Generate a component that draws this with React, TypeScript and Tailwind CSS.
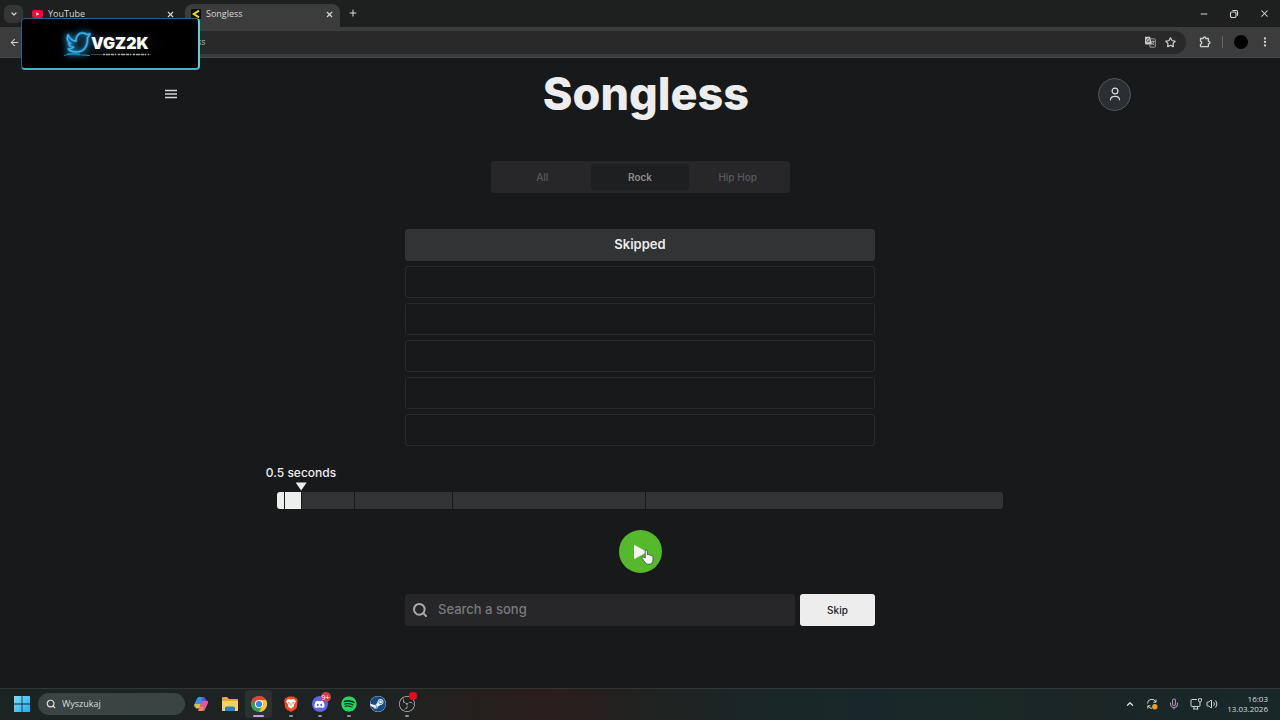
import type { ReactNode } from "react";
import {
  ArrowLeft,
  ChevronDown,
  ChevronUp,
  EllipsisVertical,
  Mic,
  Minus,
  Plus,
  Search,
  Star,
  Volume2,
  X,
} from "lucide-react";
import { FaDiscord, FaSpotify, FaSteam } from "react-icons/fa";
import { SiObsstudio } from "react-icons/si";

function TabStrip() {
  return (
    <div className="flex h-[27px] items-end bg-[#1e201f] pl-1 font-['Open_Sans',sans-serif] text-[9px] text-[#d6d8d8]">
      <button aria-label="Search tabs" className="mb-1 flex h-[18px] w-[19px] items-center justify-center rounded-md bg-[#353635]">
        <ChevronDown className="size-2" strokeWidth={3.5} />
      </button>
      <div className="flex h-[23px] w-[162px] items-center pr-[10px] pb-[3px] pl-[9px]">
        <svg viewBox="0 0 11 8" className="h-2 w-[11px]" aria-hidden="true">
          <rect width="11" height="8" rx="2" fill="#f1073c" />
          <path d="M4.3 2.2v3.6L7.4 4z" fill="#fff" />
        </svg>
        <span className="ml-[5px] flex-1">YouTube</span>
        <button aria-label="Close YouTube tab">
          <X className="size-[9px]" strokeWidth={3} />
        </button>
      </div>
      <div className="flex h-[23px] w-[155px] items-center rounded-t-lg bg-[#3c3c3c] pr-[6px] pb-[3px] pl-[6px]">
        <svg viewBox="0 0 10 10" className="size-[10px]" aria-hidden="true">
          <rect width="10" height="10" rx="1" fill="#0b0b0b" />
          <path d="M8 1.6 2.8 5 8 8.4" fill="none" stroke="#e8dc20" strokeWidth="2" />
        </svg>
        <span className="ml-[5px] flex-1">Songless</span>
        <button aria-label="Close Songless tab">
          <X className="size-[9px]" strokeWidth={3} />
        </button>
      </div>
      <button aria-label="New tab" className="mb-[9px] ml-2">
        <Plus className="size-[10px]" strokeWidth={2.5} />
      </button>
      <div className="ml-auto flex items-center gap-5 pr-[10px] pb-[8px]">
        <button aria-label="Minimize">
          <Minus className="size-[10px]" strokeWidth={2.5} />
        </button>
        <button aria-label="Restore">
          <svg viewBox="0 0 10 10" className="size-[10px]" fill="none" stroke="currentColor" strokeWidth="1.1" aria-hidden="true">
            <rect x="1.5" y="3" width="5.5" height="5.5" rx="1.2" />
            <path d="M3.4 1.5H7a1.6 1.6 0 0 1 1.6 1.6v3.6" />
          </svg>
        </button>
        <button aria-label="Close window">
          <X className="size-[11px]" strokeWidth={2.2} />
        </button>
      </div>
    </div>
  );
}

function Toolbar() {
  return (
    <div className="flex h-[31px] items-center border-b border-[#474747] bg-[#3c3c3c] pr-[9px] pl-[9px] text-[#d0d3d3]">
      <button aria-label="Back">
        <ArrowLeft className="size-[11px]" strokeWidth={2.3} />
      </button>
      <div className="ml-[60px] flex h-[23px] flex-1 items-center rounded-full bg-[#292929] pr-[10px]">
        <span className="pl-[117px] font-['Open_Sans',sans-serif] text-[9px] text-[#b5b8b8]">ss</span>
        <button aria-label="Translate" className="ml-auto">
          <svg viewBox="0 0 12 12" className="size-3" aria-hidden="true">
            <path d="M1 .8h5.2L8 8.4H1.8A.8.8 0 0 1 1 7.6z" fill="#c9cccc" />
            <path d="M5.4 3.4a1.6 1.6 0 1 0 .2 1.4H4.2" fill="none" stroke="#333" strokeWidth=".8" />
            <path d="M7 2.8h3.6a.7.7 0 0 1 .7.7v7a.7.7 0 0 1-.7.7H6.2L5.6 8.6M7.2 5.4h3.4M8.9 4.6v.8M10 5.4C9.7 7 8.8 8 7.6 8.8M8 6.6c.5 1 1.2 1.7 2.2 2.2" fill="none" stroke="#b8bbbb" strokeWidth=".8" />
          </svg>
        </button>
        <button aria-label="Bookmark this page" className="ml-[9px]">
          <Star className="size-[11px]" strokeWidth={2.6} />
        </button>
      </div>
      <button aria-label="Extensions" className="ml-[13px]">
        <svg viewBox="0 0 12 12" className="size-3" fill="none" stroke="currentColor" strokeWidth="1.3" strokeLinejoin="round" aria-hidden="true">
          <path d="M1.5 2.5h2.7c0-2 2.6-2 2.6 0h2.6v2.800c2.100 0 2.100 2.600 0 2.600v2.700H1.500V8.300c1.600-.4 1.600-2.700 0-3.100z" />
        </svg>
      </button>
      <span className="ml-[11px] h-3 w-px bg-[#646666]" />
      <button aria-label="Profile" className="ml-[11px] size-[14px] rounded-full bg-black" />
      <button aria-label="Browser menu" className="ml-[11px]">
        <EllipsisVertical className="size-3" strokeWidth={2.6} />
      </button>
    </div>
  );
}

function Banner() {
  return (
    <aside className="absolute top-[18px] left-[21px] flex h-[52px] w-[179px] items-center rounded-[4px] border border-[#236083] border-r-2 border-r-[#55d5d2] border-b-2 border-b-[#43b5be] bg-radial from-[#17191b] from-10% to-black to-60% pl-[41px]">
      <svg viewBox="0 0 28 28" className="size-7 drop-shadow-[0_0_3px_#1690c8]" fill="none" strokeLinejoin="round" aria-hidden="true">
        <path d="M5 5c2 4 4.500 6 8 6-.5-4.500 3-8.500 7-8 2 .2 3 .8 3.600 1.600L27 4l-2.500 3.800C25 16 21 22 14 22c-4 0-7-1-8.500-3 2.500 0 4-.5 5-1.800-3-.4-4.500-1.700-4.700-3.700l2 .1C5 12 3.600 9 5 5z" stroke="#1a6f9e" strokeWidth="3" />
        <path d="M5 5c2 4 4.500 6 8 6-.5-4.500 3-8.500 7-8 2 .2 3 .8 3.600 1.600L27 4l-2.500 3.800C25 16 21 22 14 22c-4 0-7-1-8.500-3 2.500 0 4-.5 5-1.800-3-.4-4.500-1.700-4.700-3.700l2 .1C5 12 3.600 9 5 5z" stroke="#43b4e6" strokeWidth="1.300" />
        <path d="M1 25.500c6-2 14-1 26 0M4 24c5-1 8-1 13 0" strokeWidth="1.200" stroke="#1f86b8" />
      </svg>
      <div className="flex flex-col pt-[2px]">
        <strong className="font-['Inter',sans-serif] text-[16px] leading-[18px] font-black text-white">VGZ2K</strong>
        <svg viewBox="0 0 60 4" className="h-1 w-[60px]" aria-hidden="true">
          <path d="M0 2.500h60" stroke="#4c5153" strokeWidth=".8" />
          <path d="M12 2.500h46" stroke="#a3a7a9" strokeWidth="1.300" strokeDasharray="2 1 4 1 3 1 1 2" />
        </svg>
      </div>
    </aside>
  );
}

const genres = ["All", "Rock", "Hip Hop"];
const guesses = ["Skipped", "", "", "", "", ""];

function Timeline() {
  return (
    <div className="mx-auto mt-[46px] flex h-[17px] w-full max-w-[726px] gap-px overflow-visible">
      <div className="grow-[7] basis-0 rounded-l-[3px] bg-[#ededee]" />
      <div className="relative grow-[16] basis-0 bg-[#ededee]">
        <div className="absolute right-0 bottom-full flex translate-x-1/2 flex-col items-center pb-[1px]">
          <span className="text-[12px] leading-4 font-medium whitespace-nowrap text-[#ededee]">0.5 seconds</span>
          <svg viewBox="0 0 12 9" className="mt-[1px] h-[9px] w-3" aria-hidden="true">
            <path d="M.5 .5h11L6 8.500z" fill="#ededee" />
          </svg>
        </div>
      </div>
      <div className="grow-[52] basis-0 bg-[#313334]" />
      <div className="grow-[97] basis-0 bg-[#313334]" />
      <div className="grow-[192] basis-0 bg-[#313334]" />
      <div className="grow-[357] basis-0 rounded-r-[3px] bg-[#313334]" />
    </div>
  );
}

function Game() {
  return (
    <main className="flex-1 bg-[#18191a] font-['Inter',sans-serif]">
      <header className="pt-[10px] pl-3">
        <div className="mx-auto grid max-w-[970px] grid-cols-[1fr_auto_1fr] items-center">
          <button aria-label="Menu" className="justify-self-start p-1">
            <svg viewBox="0 0 12 10" className="h-[10px] w-3" stroke="#d3d5d6" strokeWidth="1.400" aria-hidden="true">
              <path d="M0 1.500h12M0 5h12M0 8.500h12" />
            </svg>
          </button>
          <h1 className="text-[45px] leading-[52px] font-extrabold text-[#ededee]">Songless</h1>
          <button aria-label="Account" className="flex size-[33px] items-center justify-center justify-self-end rounded-full border border-[#54585a] bg-[#2b2f31]">
            <svg viewBox="0 0 12 14" className="h-[14px] w-3" fill="none" stroke="#d8dadb" strokeWidth="1.200" strokeLinecap="round" aria-hidden="true">
              <circle cx="6" cy="4" r="2.900" />
              <path d="M1.500 12.800c0-4.600 9-4.600 9 0" />
            </svg>
          </button>
        </div>
      </header>
      <div role="group" aria-label="Genre" className="mx-auto mt-[41px] grid w-full max-w-[299px] grid-cols-3 rounded-[3px] bg-[#272729] p-[3px]">
        {genres.map((genre) => (
          <button
            key={genre}
            aria-pressed={genre === "Rock"}
            className="h-[26px] rounded-[3px] text-[10px] font-medium text-[#59595b] aria-pressed:bg-[#1e1f21] aria-pressed:font-semibold aria-pressed:text-[#8c8c8e]"
          >
            {genre}
          </button>
        ))}
      </div>
      <ol className="mx-auto mt-9 flex w-full max-w-[470px] flex-col gap-[5px]">
        {guesses.map((guess, index) => (
          <li
            key={index}
            className={
              guess
                ? "flex h-8 items-center justify-center rounded-[3px] bg-[#313334] text-[13px] font-semibold text-[#ededee]"
                : "h-8 rounded-[3px] border border-[#292a2c]"
            }
          >
            {guess}
          </li>
        ))}
      </ol>
      <Timeline />
      <div className="relative mx-auto mt-[21px] size-[43px]">
        <button aria-label="Play" className="flex size-full items-center justify-center rounded-full bg-[#55b92b]">
          <svg viewBox="0 0 14 16" className="h-4 w-[14px]" aria-hidden="true">
            <path d="M1 2.200Q1 .5 2.500 1.400l9.800 5.500q1.500 1 0 2L2.500 14.600Q1 15.500 1 13.800z" fill="#f4f5f3" />
          </svg>
        </button>
        <svg viewBox="0 0 13 16" className="pointer-events-none absolute top-[19px] left-[22px] h-4 w-[13px]" aria-hidden="true">
          <path d="M4.200 9V2.100c0-1.600 2.200-1.600 2.200 0v3.600l.3-.2c.5-.3 1.500 0 1.700.6.600-.3 1.500 0 1.700.7.900-.3 1.900.2 1.900 1.200v3c0 2.600-1.700 4.300-4.200 4.300-2 0-3.200-.9-4.100-2.400L1 9.300c-.6-1.100.8-1.900 1.600-1.100z" fill="#f2f3f2" stroke="#3c403c" strokeWidth=".8" />
        </svg>
      </div>
      <form className="mx-auto mt-[21px] flex w-full max-w-[470px] gap-[5px]" onSubmit={(event) => event.preventDefault()}>
        <label className="flex h-8 min-w-0 flex-1 items-center rounded-[3px] bg-[#272729] pl-[7px]">
          <Search className="size-4 text-[#a9aaab]" strokeWidth={3} />
          <input
            aria-label="Search a song"
            placeholder="Search a song"
            className="ml-[10px] min-w-0 flex-1 bg-transparent text-[13px] font-medium outline-none placeholder:text-[#79797b]"
          />
        </label>
        <button type="button" className="h-8 w-[75px] rounded-[3px] bg-[#ededee] text-[10px] font-medium text-[#202122]">
          Skip
        </button>
      </form>
    </main>
  );
}

function TaskApp({ label, active, idle, children }: { label: string; active?: boolean; idle?: boolean; children: ReactNode }) {
  return (
    <button
      aria-label={label}
      className={
        active
          ? "flex h-7 w-[27px] flex-col items-center justify-end rounded-[3px] bg-[#2a3130]"
          : "flex h-7 w-[27px] flex-col items-center justify-end rounded-[3px]"
      }
    >
      {children}
      <span
        className={
          active
            ? "mt-[3px] mb-px h-[2px] w-[11px] rounded-full bg-[#c89add]"
            : idle
              ? "mt-[3px] mb-px h-[2px] w-1"
              : "mt-[3px] mb-px h-[2px] w-1 rounded-full bg-[#8d9392]"
        }
      />
    </button>
  );
}

function Taskbar() {
  return (
    <footer className="flex h-8 items-center border-t border-[#303635] bg-[linear-gradient(to_right,#1b2423_0%,#1e2322_30%,#251f1d_38%,#2b1d1d_43%,#212120_49%,#1a2727_60%,#18282a_68%,#1a2927_75%,#1b2625_85%,#182829_100%)] pb-px font-['Open_Sans',sans-serif] text-[#d9dcdc]">
      <button aria-label="Start" className="ml-[14px]">
        <svg viewBox="0 0 16 16" className="size-4" aria-hidden="true">
          <linearGradient id="win" x1="0" y1="0" x2="1" y2="1">
            <stop stopColor="#83dcfa" />
            <stop offset="1" stopColor="#1badf0" />
          </linearGradient>
          <path d="M0 0h7.600v7.600H0zM8.400 0H16v7.600H8.400zM0 8.400h7.600V16H0zM8.400 8.400H16V16H8.400z" fill="url(#win)" />
        </svg>
      </button>
      <label className="ml-2 flex h-[22px] w-[147px] items-center rounded-full bg-[#3a4443] pl-2">
        <Search className="size-[10px]" strokeWidth={2.8} />
        <input aria-label="Wyszukaj" placeholder="Wyszukaj" className="ml-[6px] w-24 bg-transparent text-[9px] outline-none placeholder:text-[#d9dcdc]" />
      </label>
      <div className="ml-[2px] flex items-center gap-[2px]">
        <TaskApp label="Copilot" idle>
          <svg viewBox="0 0 16 16" className="size-4" aria-hidden="true">
            <path d="M4 2.500Q4.600 1 6.200 1H11l-2.800 9q-.5 1.500-2 1.500H2.500Q.5 11.500 1 9z" fill="#3794e8" />
            <path d="M1.300 8 3 12.500h4L8.500 8z" fill="#e6bd3e" />
            <path d="M12 13.500q-.6 1.500-2.200 1.500H5.500L8 6q.5-1.500 2-1.500h3.500q2 0 1.500 2.500z" fill="#dd5a9c" />
            <path d="M9.500 1h1.800l2.200 4H10q-1.500 0-2 1.500z" fill="#5b54dd" />
            <path d="M5 15h4.500l1.500-4H7z" fill="#f08a50" />
          </svg>
        </TaskApp>
        <TaskApp label="File Explorer" idle>
          <svg viewBox="0 0 16 16" className="size-4" aria-hidden="true">
            <path d="M0 2q0-1 1-1h4l2 2h8q1 0 1 1v10q0 1-1 1H1q-1 0-1-1z" fill="#e3a92e" />
            <path d="M0 5h16v9q0 1-1 1H1q-1 0-1-1z" fill="#f8d15c" />
            <path d="M3 15v-3q0-1.500 1.500-1.500h7q1.500 0 1.500 1.500v3z" fill="#2681cb" />
          </svg>
        </TaskApp>
        <TaskApp label="Chrome" active>
          <svg viewBox="0 0 16 16" className="size-4" aria-hidden="true">
            <circle cx="8" cy="8" r="8" fill="#34a353" />
            <path d="M8 4h6.930A8 8 0 0 1 8 16l3.460-6z" fill="#fac52b" />
            <path d="M1.070 4A8 8 0 0 1 14.930 4H8L4.540 10z" fill="#e44335" />
            <circle cx="8" cy="8" r="4" fill="#fff" />
            <circle cx="8" cy="8" r="3.100" fill="#3f82ee" />
          </svg>
        </TaskApp>
        <span className="w-px" />
        <TaskApp label="Brave">
          <svg viewBox="0 0 14 16" className="h-4 w-[14px]" aria-hidden="true">
            <path d="M4 .5h6L11.500 2l1.500.4.700 2-.7 6.500q-.4 1.700-2 2.800L7 16l-4-2.300q-1.600-1.100-2-2.800L.3 4.400l.7-2L2.500 2z" fill="#ee4a25" />
            <path d="m4 3 3 .6L10 3l2 2.500-2.200 3.200.3 1.500L7 12.800l-3.100-2.600.3-1.500L2 5.500z" fill="#fff" />
            <path d="m3.600 6 2 .6-.3 1.600zM10.400 6l-2 .6.300 1.600zM7 6l.6 3.200L7 9.800l-.6-.6z" fill="#ee4a25" />
          </svg>
        </TaskApp>
        <TaskApp label="Discord, more than nine notifications">
          <span className="relative flex size-4 items-center justify-center rounded-full bg-[#5966e8]">
            <FaDiscord className="size-[11px] text-white" />
            <span className="absolute -top-1 -right-[3px] flex size-[10px] items-center justify-center rounded-full bg-[#d53c48] text-[7px] leading-none text-white">9+</span>
          </span>
        </TaskApp>
        <TaskApp label="Spotify">
          <FaSpotify className="size-4 rounded-full bg-[#10231a] text-[#25d563]" />
        </TaskApp>
        <TaskApp label="Steam" idle>
          <span className="flex size-4 items-center justify-center rounded-full bg-[#e4edf3]">
            <FaSteam className="size-4 text-[#164a80]" />
          </span>
        </TaskApp>
        <TaskApp label="OBS Studio">
          <span className="relative">
            <SiObsstudio className="size-4 text-[#b9bbbb]" />
            <span className="absolute -top-1 -right-[2px] size-2 rounded-full bg-[#ee0812]" />
          </span>
        </TaskApp>
      </div>
      <div className="ml-auto flex items-center pr-3">
        <ChevronUp className="size-[10px]" strokeWidth={3.2} />
        <svg viewBox="0 0 12 12" className="ml-[11px] size-3" fill="none" stroke="#cfd4d4" strokeWidth="1" aria-hidden="true">
          <path d="M1.500 5.500A4.300 4.300 0 0 1 9.800 4M10 1.500V4.200H7.300M6 10.300A4.300 4.300 0 0 1 2 8M1.800 10.500V7.800h2.700" />
          <circle cx="8.800" cy="8.800" r="2.700" fill="#f19b23" stroke="none" />
        </svg>
        <Mic className="ml-[10px] size-3 text-[#a691ac]" strokeWidth={2.2} />
        <svg viewBox="0 0 12 12" className="ml-[10px] size-3" fill="none" stroke="#cfd4d4" strokeWidth="1" aria-hidden="true">
          <path d="M7 1.500H1.700Q1 1.500 1 2.200v5.600q0 .7.700.7h7.600q.7 0 .7-.7V6M3 11h5.500M4 8.500V11M7.500 8.500V11M10 6V4M8.500.8v1.700q0 1.500 1.500 1.500t1.500-1.500V.8z" />
        </svg>
        <Volume2 className="ml-[4px] size-3" strokeWidth={2} />
        <time className="ml-[9px] text-right text-[8px] leading-[10px]">
          16:03
          <br />
          13.03.2026
        </time>
      </div>
    </footer>
  );
}

export default function App() {
  return (
    <div className="relative flex min-h-screen flex-col bg-[#18191a]">
      <TabStrip />
      <Toolbar />
      <Game />
      <Taskbar />
      <Banner />
    </div>
  );
}
